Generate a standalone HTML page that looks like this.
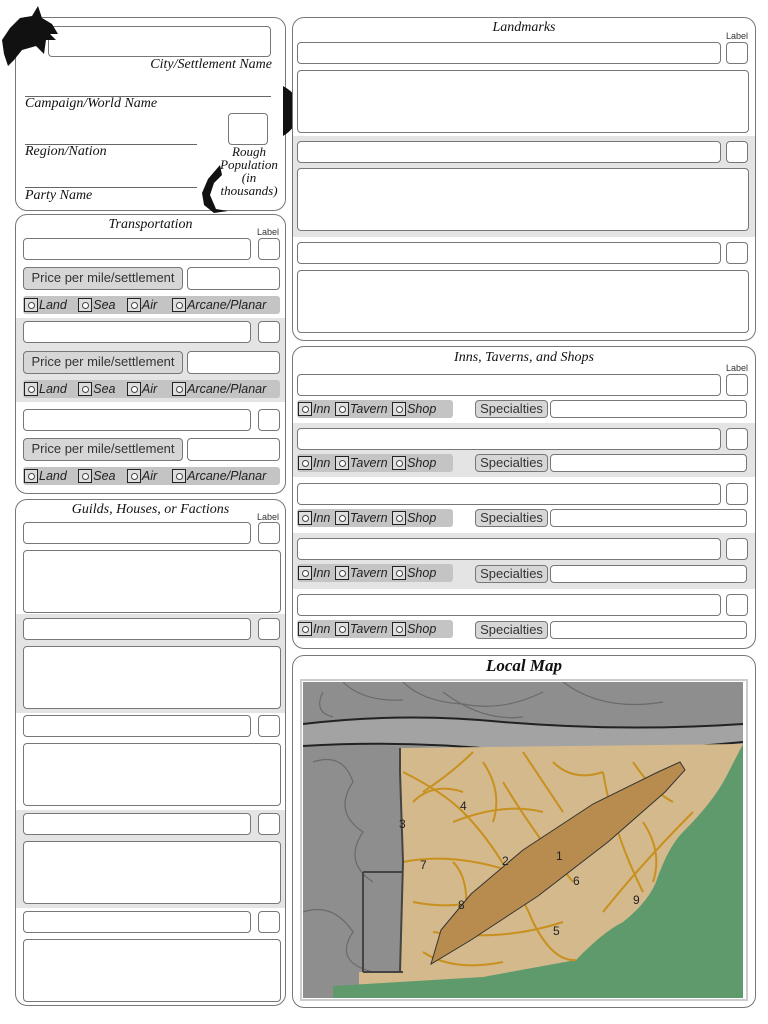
<!DOCTYPE html>
<html><head><meta charset="utf-8"><style>
*{margin:0;padding:0;box-sizing:border-box}
body{width:768px;height:1024px;background:#fff;position:relative;overflow:hidden;font-family:"Liberation Sans",sans-serif;color:#222}
.a{position:absolute}
.p{position:absolute;border:1.5px solid #777;border-radius:12px;background:#fff}
.b{position:absolute;border:1.3px solid #777;border-radius:4px;background:#fff}
.g{position:absolute;background:#e4e4e4}
.t{position:absolute;font-family:"Liberation Serif",serif;font-style:italic;font-size:14px;color:#111;text-align:center}
.lb{position:absolute;font-size:9px;color:#333}
.btn{position:absolute;border:1.3px solid #777;border-radius:4px;background:#d6d6d6;font-size:13px;color:#333;text-align:center;line-height:20px}
.rr{position:absolute;background:#c4c4c4;border-radius:3px;height:18px;font-style:italic;font-size:12.5px;color:#222;line-height:18px;white-space:nowrap}
.rr i{display:inline-block;width:14px;height:14px;border:1.5px solid #222;vertical-align:-3px;margin:0 1px 0 1px;position:relative;background:#ddd}
.rr i:after{content:"";position:absolute;left:3px;top:3px;width:5px;height:5px;border:1px solid #444;border-radius:50%;background:#fff}
.ln{position:absolute;height:1px;background:#666}
</style></head><body>

<!-- Panel 1 -->
<div class="p" style="left:15px;top:17px;width:271px;height:194px"></div>
<div class="b" style="left:48px;top:26px;width:223px;height:31px"></div>
<div class="t" style="left:120px;top:57px;width:152px;text-align:right">City/Settlement Name</div>
<div class="ln" style="left:25px;top:96px;width:246px"></div>
<div class="t" style="left:25px;top:96px;text-align:left">Campaign/World Name</div>
<div class="b" style="left:228px;top:113px;width:40px;height:32px"></div>
<div class="ln" style="left:25px;top:144px;width:172px"></div>
<div class="t" style="left:25px;top:144px;text-align:left">Region/Nation</div>
<div class="t" style="left:213px;top:145px;width:72px;line-height:13px;font-size:13px">Rough<br>Population<br>(in<br>thousands)</div>
<div class="ln" style="left:25px;top:187px;width:172px"></div>
<div class="t" style="left:25px;top:188px;text-align:left">Party Name</div>
<svg class="a" style="left:0;top:4px" width="62" height="62" viewBox="0 0 62 62"><path d="M38 2 L42 14 L52 20 L58 30 L50 30 L56 36 L46 36 L44 50 L36 42 L22 46 L14 56 L8 62 L4 50 L2 36 L10 24 L20 14 L32 12 Z" fill="#111"/></svg>
<svg class="a" style="left:283px;top:86px" width="18" height="50"><path d="M0 0 Q18 10 16 25 Q14 42 0 50 Z" fill="#111"/></svg>
<svg class="a" style="left:200px;top:165px" width="32" height="48"><path d="M20 0 L22 10 L14 18 L10 30 L16 44 L28 46 L14 48 L4 40 L2 28 L8 14 Z" fill="#111"/></svg>

<!-- Transportation -->
<div class="p" style="left:15px;top:214px;width:271px;height:280px"></div>
<div class="g" style="left:16px;top:318px;width:269px;height:84px"></div>
<div class="t" style="left:15px;top:217px;width:271px">Transportation</div>
<div class="lb" style="left:257px;top:227px">Label</div>
<div class="b" style="left:23px;top:238px;width:228px;height:22px"></div><div class="b" style="left:258px;top:238px;width:22px;height:22px"></div>
<div class="btn" style="left:23px;top:267px;width:160px;height:23px">Price per mile/settlement</div><div class="b" style="left:187px;top:267px;width:93px;height:23px"></div>
<div class="rr" style="left:23px;top:296px;width:257px"><i></i>Land&nbsp;&nbsp;&nbsp;<i></i>Sea&nbsp;&nbsp;&nbsp;<i></i>Air&nbsp;&nbsp;&nbsp;&nbsp;<i></i>Arcane/Planar</div>
<div class="b" style="left:23px;top:321px;width:228px;height:22px"></div><div class="b" style="left:258px;top:321px;width:22px;height:22px"></div>
<div class="btn" style="left:23px;top:351px;width:160px;height:23px">Price per mile/settlement</div><div class="b" style="left:187px;top:351px;width:93px;height:23px"></div>
<div class="rr" style="left:23px;top:380px;width:257px"><i></i>Land&nbsp;&nbsp;&nbsp;<i></i>Sea&nbsp;&nbsp;&nbsp;<i></i>Air&nbsp;&nbsp;&nbsp;&nbsp;<i></i>Arcane/Planar</div>
<div class="b" style="left:23px;top:409px;width:228px;height:22px"></div><div class="b" style="left:258px;top:409px;width:22px;height:22px"></div>
<div class="btn" style="left:23px;top:438px;width:160px;height:23px">Price per mile/settlement</div><div class="b" style="left:187px;top:438px;width:93px;height:23px"></div>
<div class="rr" style="left:23px;top:467px;width:257px"><i></i>Land&nbsp;&nbsp;&nbsp;<i></i>Sea&nbsp;&nbsp;&nbsp;<i></i>Air&nbsp;&nbsp;&nbsp;&nbsp;<i></i>Arcane/Planar</div>

<!-- Guilds -->
<div class="p" style="left:15px;top:499px;width:271px;height:507px"></div>
<div class="g" style="left:16px;top:614px;width:269px;height:99px"></div>
<div class="g" style="left:16px;top:810px;width:269px;height:98px"></div>
<div class="t" style="left:15px;top:502px;width:271px">Guilds, Houses, or Factions</div>
<div class="lb" style="left:257px;top:512px">Label</div>
<div class="b" style="left:23px;top:522px;width:228px;height:22px"></div><div class="b" style="left:258px;top:522px;width:22px;height:22px"></div>
<div class="b" style="left:23px;top:550px;width:258px;height:63px"></div>
<div class="b" style="left:23px;top:618px;width:228px;height:22px"></div><div class="b" style="left:258px;top:618px;width:22px;height:22px"></div>
<div class="b" style="left:23px;top:646px;width:258px;height:63px"></div>
<div class="b" style="left:23px;top:715px;width:228px;height:22px"></div><div class="b" style="left:258px;top:715px;width:22px;height:22px"></div>
<div class="b" style="left:23px;top:743px;width:258px;height:63px"></div>
<div class="b" style="left:23px;top:813px;width:228px;height:22px"></div><div class="b" style="left:258px;top:813px;width:22px;height:22px"></div>
<div class="b" style="left:23px;top:841px;width:258px;height:63px"></div>
<div class="b" style="left:23px;top:911px;width:228px;height:22px"></div><div class="b" style="left:258px;top:911px;width:22px;height:22px"></div>
<div class="b" style="left:23px;top:939px;width:258px;height:63px"></div>

<!-- Landmarks -->
<div class="p" style="left:292px;top:17px;width:464px;height:324px"></div>
<div class="g" style="left:293px;top:136px;width:462px;height:101px"></div>
<div class="t" style="left:292px;top:20px;width:464px">Landmarks</div>
<div class="lb" style="left:726px;top:31px">Label</div>
<div class="b" style="left:297px;top:42px;width:424px;height:22px"></div><div class="b" style="left:726px;top:42px;width:22px;height:22px"></div>
<div class="b" style="left:297px;top:70px;width:452px;height:63px"></div>
<div class="b" style="left:297px;top:141px;width:424px;height:22px"></div><div class="b" style="left:726px;top:141px;width:22px;height:22px"></div>
<div class="b" style="left:297px;top:168px;width:452px;height:63px"></div>
<div class="b" style="left:297px;top:242px;width:424px;height:22px"></div><div class="b" style="left:726px;top:242px;width:22px;height:22px"></div>
<div class="b" style="left:297px;top:270px;width:452px;height:63px"></div>

<!-- Inns -->
<div class="p" style="left:292px;top:346px;width:464px;height:303px"></div>
<div class="g" style="left:293px;top:423px;width:462px;height:54px"></div>
<div class="g" style="left:293px;top:533px;width:462px;height:56px"></div>
<div class="t" style="left:292px;top:350px;width:464px">Inns, Taverns, and Shops</div>
<div class="lb" style="left:726px;top:363px">Label</div>

<div class="b" style="left:297px;top:374px;width:424px;height:22px"></div><div class="b" style="left:726px;top:374px;width:22px;height:22px"></div>
<div class="rr" style="left:297px;top:400px;width:156px"><i></i>Inn <i></i>Tavern <i></i>Shop</div>
<div class="btn" style="left:475px;top:400px;width:73px;height:18px;line-height:16px">Specialties</div><div class="b" style="left:550px;top:400px;width:197px;height:18px"></div>

<div class="b" style="left:297px;top:428px;width:424px;height:22px"></div><div class="b" style="left:726px;top:428px;width:22px;height:22px"></div>
<div class="rr" style="left:297px;top:454px;width:156px"><i></i>Inn <i></i>Tavern <i></i>Shop</div>
<div class="btn" style="left:475px;top:454px;width:73px;height:18px;line-height:16px">Specialties</div><div class="b" style="left:550px;top:454px;width:197px;height:18px"></div>

<div class="b" style="left:297px;top:483px;width:424px;height:22px"></div><div class="b" style="left:726px;top:483px;width:22px;height:22px"></div>
<div class="rr" style="left:297px;top:509px;width:156px"><i></i>Inn <i></i>Tavern <i></i>Shop</div>
<div class="btn" style="left:475px;top:509px;width:73px;height:18px;line-height:16px">Specialties</div><div class="b" style="left:550px;top:509px;width:197px;height:18px"></div>

<div class="b" style="left:297px;top:538px;width:424px;height:22px"></div><div class="b" style="left:726px;top:538px;width:22px;height:22px"></div>
<div class="rr" style="left:297px;top:564px;width:156px"><i></i>Inn <i></i>Tavern <i></i>Shop</div>
<div class="btn" style="left:475px;top:565px;width:73px;height:18px;line-height:16px">Specialties</div><div class="b" style="left:550px;top:565px;width:197px;height:18px"></div>

<div class="b" style="left:297px;top:594px;width:424px;height:22px"></div><div class="b" style="left:726px;top:594px;width:22px;height:22px"></div>
<div class="rr" style="left:297px;top:620px;width:156px"><i></i>Inn <i></i>Tavern <i></i>Shop</div>
<div class="btn" style="left:475px;top:621px;width:73px;height:18px;line-height:16px">Specialties</div><div class="b" style="left:550px;top:621px;width:197px;height:18px"></div>

<!-- Map -->
<div class="p" style="left:292px;top:655px;width:464px;height:353px"></div>
<div class="t" style="left:292px;top:656px;width:464px;font-size:17px;font-weight:bold">Local Map</div>
<div class="a" style="left:300px;top:679px;width:448px;height:322px;border:2px solid #ccc"></div>
<svg class="a" style="left:303px;top:682px" width="440" height="316" viewBox="0 0 440 316">
<rect width="440" height="316" fill="#8e8e8e"/>
<g fill="none" stroke="#6a6a6a" stroke-width="1.2">
<path d="M40 0 Q60 20 100 18 M100 0 Q120 20 160 22 Q200 30 240 10 M260 0 Q300 30 360 20 M20 10 Q10 30 30 35 M140 10 Q180 40 220 35"/>
<path d="M10 80 Q40 70 50 100 Q30 130 60 150 Q40 180 70 200 M0 230 Q30 220 50 250 Q30 280 70 290"/>
</g>
<path d="M0 42 Q100 30 200 40 Q320 50 440 42 L440 62 Q320 72 200 70 Q100 60 0 64 Z" fill="#a3a3a3"/>
<path d="M0 42 Q100 30 200 40 Q320 50 440 42" stroke="#222" stroke-width="2" fill="none"/>
<path d="M0 64 Q100 58 200 68 Q320 72 440 60" stroke="#222" stroke-width="2" fill="none"/>
<path d="M97 66 L440 62 L440 316 L56 316 L56 290 L97 290 L100 180 Z" fill="#d4b98c"/>
<path d="M440 62 L440 316 L30 316 L30 304 L180 295 L273 278 Q300 250 320 240 Q345 220 353 200 Q365 165 380 150 Q410 120 423 95 Z" fill="#5e9a6c"/>
<g fill="none" stroke="#c8901e" stroke-width="2">
<path d="M100 90 Q140 110 160 130 Q200 170 230 240 Q250 280 273 278"/>
<path d="M100 180 Q150 170 210 190 M120 110 Q150 90 170 70 M200 100 Q230 150 270 200 M300 90 Q310 150 340 210 M130 250 Q200 260 260 240 M150 140 Q200 120 240 130 M300 230 Q340 180 390 130 M220 70 Q240 100 260 130 M330 80 Q350 110 370 120 M110 220 Q160 230 200 210 M110 120 Q130 100 160 110 M180 80 Q200 110 190 140 M250 80 Q270 100 300 90 M340 140 Q360 170 350 200 M120 270 Q150 290 200 280 M150 180 Q170 200 160 250"/>
</g>
<path d="M377 80 L355 90 L290 122 L220 168 L168 212 L138 248 L128 282 L168 258 L235 214 L305 160 L362 110 L382 88 Z" fill="#b88c4e" stroke="#333" stroke-width="1"/>
<path d="M97 66 L97 90 L100 180 L97 290" stroke="#444" stroke-width="2" fill="none"/>
<path d="M60 190 L100 190 M60 190 L60 290 M100 290 L60 290" stroke="#444" stroke-width="2" fill="none"/>
<g font-family="Liberation Sans" font-size="12" fill="#222">
<text x="253" y="178">1</text><text x="199" y="183">2</text><text x="96" y="146">3</text><text x="157" y="128">4</text><text x="250" y="253">5</text><text x="270" y="203">6</text><text x="117" y="187">7</text><text x="155" y="227">8</text><text x="330" y="222">9</text>
</g>
</svg>
</body></html>
